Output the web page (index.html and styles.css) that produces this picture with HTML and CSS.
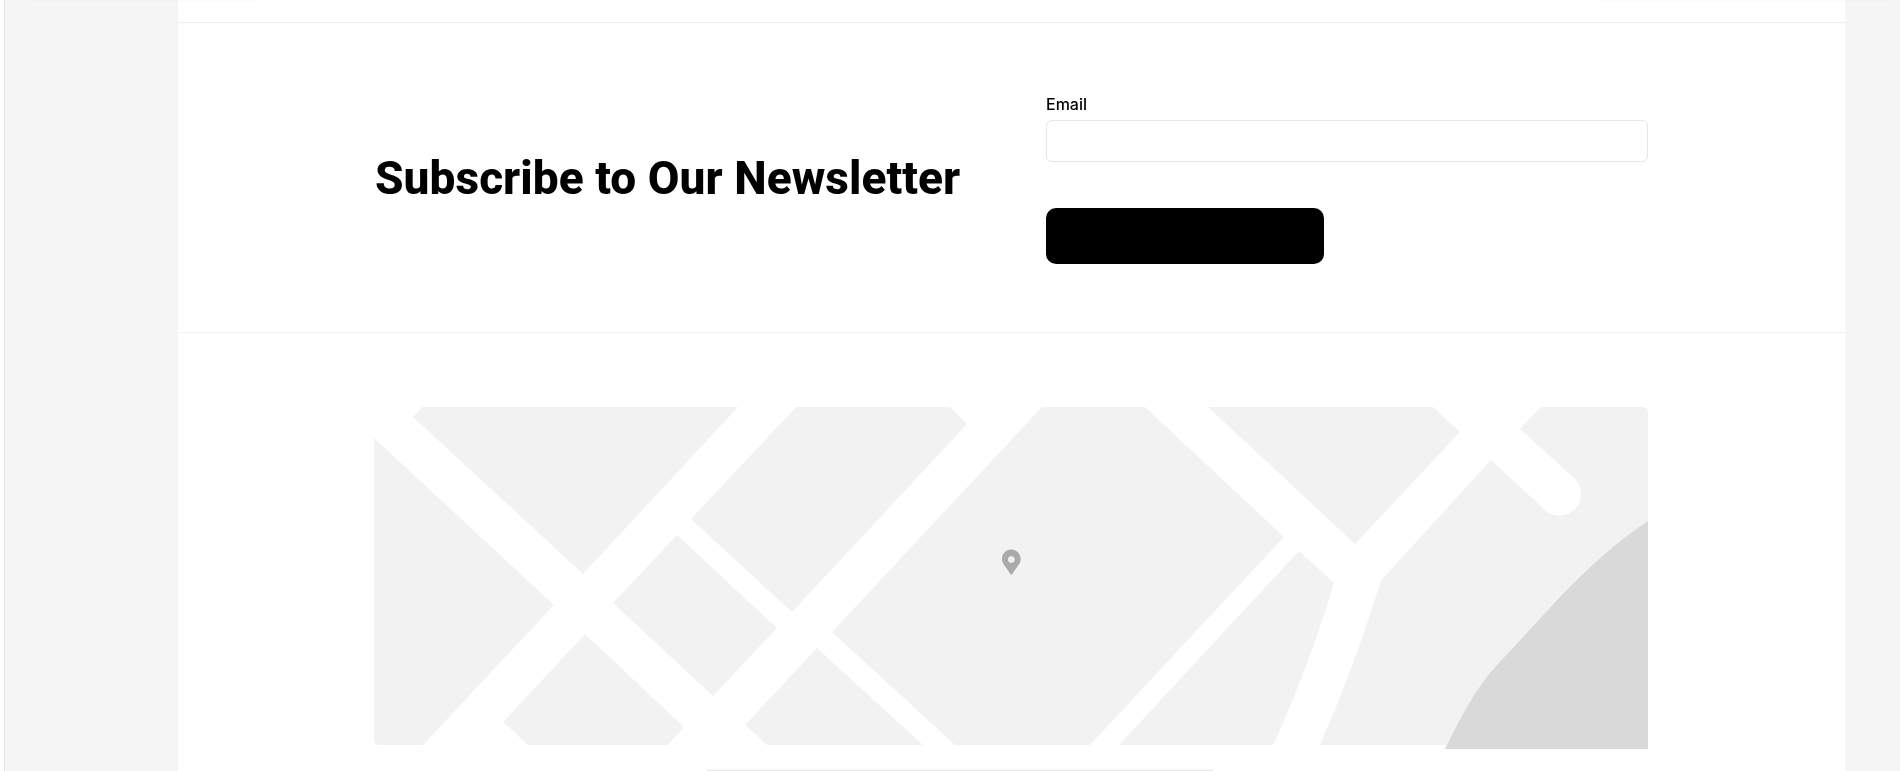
FILE: index.html
```html
<!DOCTYPE html>
<html lang="en">
<head>
    <meta charset="UTF-8">
    <meta name="viewport" content="width=device-width, initial-scale=1.0">
    <title>Subscribe to Our Newsletter</title>
    <link rel="stylesheet" href="styles.css">
</head>
<body>
    <div class="page">
        <div class="sliver sliver-left"></div>
        <div class="sliver sliver-right"></div>
        <div class="sliver sliver-bottom"></div>

        <main class="panel">
            <div class="top-strip"></div>

            <section class="newsletter">
                <h2 class="newsletter-title">Subscribe to Our Newsletter</h2>
                <form class="newsletter-form">
                    <label class="field-label" for="email">Email</label>
                    <input class="field-input" id="email" type="email">
                    <button class="submit-button" type="button" aria-label="Subscribe"></button>
                </form>
            </section>

            <section class="map-section">
                <!-- viewBox uses page coordinates, so the blocks read straight off the picture -->
                <svg class="map" viewBox="374 407 1274 342" width="1274" height="342" aria-label="Map">
                    <g fill="#f2f2f2">
                        <path d="M374 438 L554 605 L423 745 H380 Q374 745 374 739 Z"/>
                        <path d="M422 407 H738 L583 574 L413 417 Z"/>
                        <path d="M796 407 H950 L967 424 L792 612 L691 519 Z"/>
                        <path d="M677 535 L777 628 L713 696 L613 603 Z"/>
                        <path d="M585 634 L684 727 L668 745 H528 L503 722 Z"/>
                        <path d="M817 648 L923 745 H767 L745 725 Z"/>
                        <path d="M1042 407 H1145 L1284 537 L1090 745 H955 L832 632 Z"/>
                        <path d="M1208 407 H1433 L1460 432 L1355 544 Z"/>
                        <path d="M1299 551 L1334 583 Q1307 672 1273 745 H1119 Z"/>
                        <path d="M1541 407 H1642 Q1648 407 1648 413 V745 H1320 Q1353 670 1380 584 Q1381 580 1384 577 L1491 460 L1545 510 A21.5 21.5 0 0 0 1574 478 L1520 429 Z"/>
                    </g>
                    <path fill="#d9d9d9" d="M1445 749 C1462 714 1478 685 1497 665 C1510 652 1540 618 1560 597 C1590 566 1615 543 1648 521 V749 Z"/>
                    <path fill="#aaaaaa" fill-rule="evenodd" d="M1011.3 549.5 C1016.5 549.5 1020.7 553.7 1020.7 558.9 C1020.7 561.1 1020 562.9 1018.8 564.5 L1012 574.3 Q1011.3 575.1 1010.6 574.3 L1003.8 564.5 C1002.7 562.9 1002 561.1 1002 558.9 C1002 553.7 1006.1 549.5 1011.3 549.5 Z M1011.3 556.2 A3.3 3.3 0 1 0 1011.3 562.8 A3.3 3.3 0 1 0 1011.3 556.2 Z"/>
                </svg>
            </section>
        </main>
    </div>
</body>
</html>
```

FILE: styles.css
```css
html {
    background-color: #fff;
}
body {
    margin: 0;
    height: 771px;
    overflow: hidden;
}
.page {
    position: relative;
    height: 771px;
    margin-left: 4px;
    padding: 0 55px 0 173px;
    border-left: 1px solid #e4e4e4;
    background-color: #f5f5f5;
}
.panel {
    height: 771px;
    background-color: #fff;
}
.top-strip {
    height: 22px;
    border-bottom: 1px solid #eee;
}

/* edges of the cards that lie above and below this part of the page */
.sliver {
    position: absolute;
    height: 1px;
    background-color: #ececec;
    box-shadow: 0 0 2px rgba(0, 0, 0, 0.08);
}
.sliver-left {
    top: -1px;
    left: 26px;
    width: 226px;
}
.sliver-right {
    top: -1px;
    left: 1595px;
    width: 290px;
}
.sliver-bottom {
    bottom: 0;
    left: 702px;
    width: 506px;
    background-color: #e6e6e6;
}

.newsletter {
    display: grid;
    grid-template-columns: 632px 602px;
    column-gap: 40px;
    align-items: center;
    height: 309px;
    padding: 0 197px 0 196px;
    border-bottom: 1px solid #f1f1f1;
}
.newsletter-title {
    margin: 0;
    padding-left: 1px;
    font-family: Roboto, sans-serif;
    font-size: 46px;
    font-weight: 800;
    line-height: 56px;
    letter-spacing: 0.05px;
    color: #000;
    will-change: transform;
}
.newsletter-form {
    display: flex;
    flex-direction: column;
    align-items: flex-start;
    padding-top: 1px;
}
.field-label {
    margin-bottom: 4px;
    font-family: Inter, sans-serif;
    font-size: 16px;
    font-weight: 500;
    line-height: 24px;
    color: #000;
    will-change: transform;
}
.field-input {
    box-sizing: border-box;
    width: 602px;
    height: 42px;
    margin-bottom: 46px;
    border: 1px solid #e6e6e6;
    border-radius: 6px;
    background-color: #fff;
}
.submit-button {
    width: 278px;
    height: 56px;
    border: 0;
    border-radius: 10px;
    background-color: #000;
}

.map-section {
    padding: 74px 197px 0 196px;
}
.map {
    display: block;
}
```
